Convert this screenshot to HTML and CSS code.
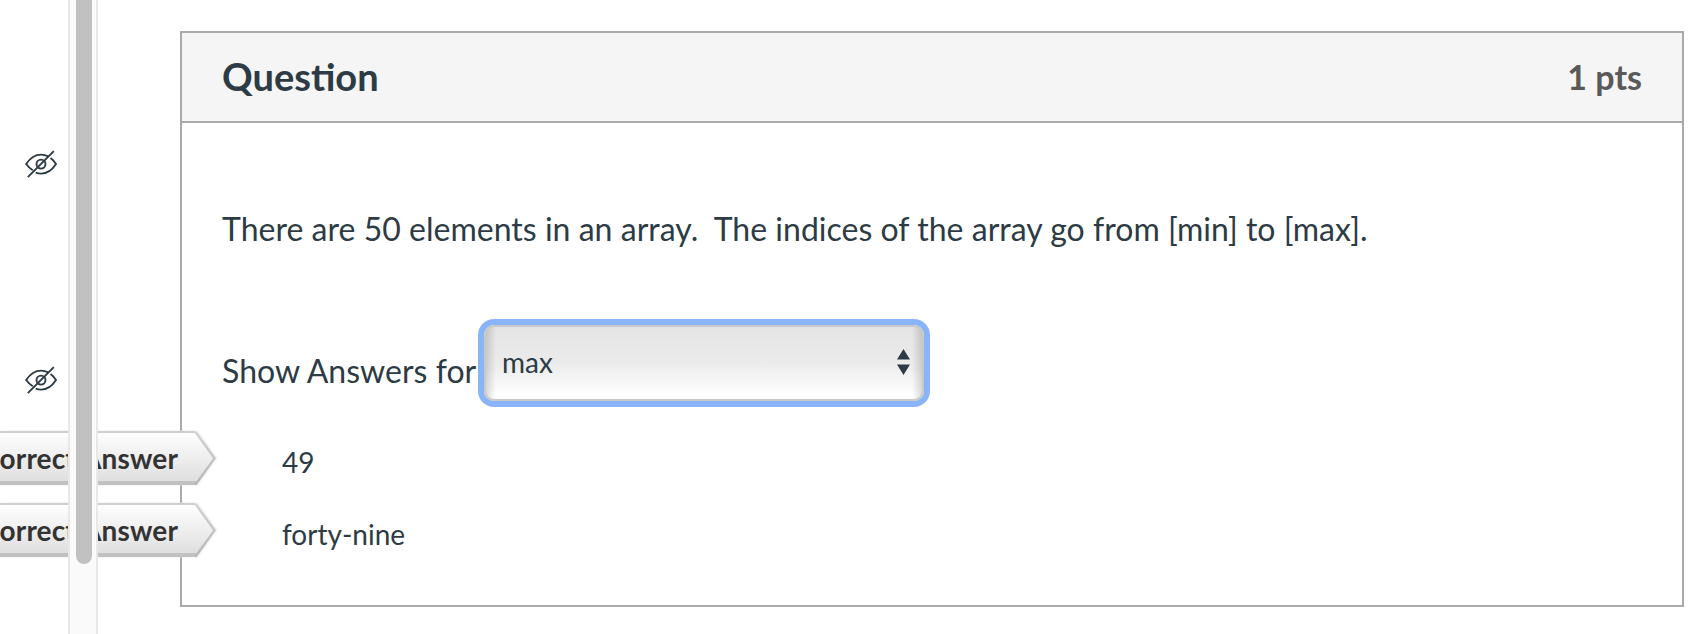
FILE: index.html
```html
<!DOCTYPE html>
<html lang="en">
<head>
<meta charset="utf-8">
<title>Question</title>
<link rel="stylesheet" href="styles.css">
</head>
<body>
<svg class="defs" aria-hidden="true">
  <defs>
    <linearGradient id="tag-fill" x1="0" y1="0" x2="0" y2="1">
      <stop offset="0" stop-color="#ffffff"/>
      <stop offset="1" stop-color="#dddddd"/>
    </linearGradient>
    <linearGradient id="tag-edge" x1="0" y1="0" x2="0" y2="1">
      <stop offset="0" stop-color="#d2d2d2"/>
      <stop offset="1" stop-color="#b4b4b4"/>
    </linearGradient>
    <symbol id="hidden-eye" viewBox="0 0 32 28">
      <g fill="none" stroke="#2d3b45" stroke-width="1.9">
        <path d="M7.800 20.200C5 18.400 2.600 16.100 1.200 14C4.600 8.800 9.800 4.600 16 4.600C18.800 4.600 21 5.300 23.200 6.400"/>
        <path d="M25.500 8C27.800 9.600 29.600 11.900 31 14C27.600 19.300 22.400 23.600 16 23.600C14 23.600 12.200 23.200 10.800 22.600"/>
        <circle cx="16" cy="14.100" r="4.500"/>
        <path d="M2.800 27.100L28.800 1.100"/>
      </g>
    </symbol>
  </defs>
</svg>
<div class="page">
  <aside class="sidebar">
    <div class="icons">
      <svg class="eye"><use href="#hidden-eye"/></svg>
      <svg class="eye"><use href="#hidden-eye"/></svg>
    </div>
    <div class="scrollbar"><div class="thumb"></div></div>
  </aside>
  <main class="question">
    <header class="question-header">
      <h1 class="title">Question</h1>
      <span class="points">1 pts</span>
    </header>
    <div class="question-body">
      <p class="prompt">There are 50 elements in an array.&nbsp; The indices of the array go from [min] to [max].</p>
      <div class="chooser">
        <span class="chooser-label">Show Answers for</span>
        <div class="select">
          <span>max</span>
          <svg class="arrows" viewBox="0 0 13 26"><path d="M6.500 0L13 10.500H0ZM0 15.500H13L6.500 26Z" fill="#2d3b45"/></svg>
        </div>
      </div>
      <div class="answer">
        <div class="tag">
          <svg class="tag-shape" viewBox="0 0 218 56"><path d="M-4 1H195L214.500 27.500L195 53H-4Z" fill="url(#tag-fill)"/><path d="M0 52H196" stroke="#c1c1c1" stroke-width="4"/><path d="M0 1H195" stroke="#cfcfcf" stroke-width="2"/><path d="M195.500 1L214.500 27.300L195.500 53.500" fill="none" stroke="url(#tag-edge)" stroke-width="2.200"/></svg>
          <span class="tag-text">Correct Answer</span>
        </div>
        49
      </div>
      <div class="answer">
        <div class="tag">
          <svg class="tag-shape" viewBox="0 0 218 56"><path d="M-4 1H195L214.500 27.500L195 53H-4Z" fill="url(#tag-fill)"/><path d="M0 52H196" stroke="#c1c1c1" stroke-width="4"/><path d="M0 1H195" stroke="#cfcfcf" stroke-width="2"/><path d="M195.500 1L214.500 27.300L195.500 53.500" fill="none" stroke="url(#tag-edge)" stroke-width="2.200"/></svg>
          <span class="tag-text">Correct Answer</span>
        </div>
        forty-nine
      </div>
    </div>
  </main>
</div>
</body>
</html>
```
FILE: styles.css
```css
* { box-sizing: border-box; }
body {
  margin: 0;
  background: #fff;
  color: #2d3b45;
  font-family: Lato, "Liberation Sans", sans-serif;
  overflow: hidden;
}
.defs { position: absolute; width: 0; height: 0; }
.page { display: flex; height: 634px; overflow: hidden; }
.sidebar { display: flex; width: 98px; flex: none; }
.icons {
  display: flex;
  flex-direction: column;
  gap: 188px;
  width: 68px;
  padding: 150px 0 0 25px;
}
.eye { display: block; width: 32px; height: 28px; }
.scrollbar {
  position: relative;
  z-index: 2;
  width: 30px;
  padding-left: 6px;
  background: #fafafa;
  border: solid #e8e8e8;
  border-width: 0 2px;
}
.thumb {
  width: 16px;
  height: 564px;
  background: #c1c1c1;
  border-radius: 0 0 8px 8px;
}
.question {
  width: 1504px;
  height: 576px;
  margin: 31px 0 0 82px;
  border: 2px solid #aaa;
}
.question-header {
  display: flex;
  align-items: center;
  justify-content: space-between;
  height: 90px;
  padding: 0 40px 2px;
  background: #f5f5f5;
  border-bottom: 2px solid #aaa;
}
.title { margin: 0; font-size: 38px; font-weight: 700; line-height: 46px; }
.points { color: #595959; font-size: 34px; font-weight: 700; }
.question-body { padding: 86px 40px 0; }
.prompt { margin: 0; font-size: 32px; line-height: 40px; letter-spacing: .02px; white-space: nowrap; }
.chooser { display: flex; margin-top: 76px; height: 76px; }
.chooser-label { width: 262px; padding-top: 26px; font-size: 32px; line-height: 40px; letter-spacing: .04px; white-space: nowrap; }
.select {
  display: flex;
  align-items: center;
  justify-content: space-between;
  width: 440px;
  height: 76px;
  padding: 0 12px 2px 16px;
  border: 2px solid #c8c8c8;
  border-radius: 10px;
  background:
    linear-gradient(90deg, rgba(0, 0, 0, .14), transparent 10px, transparent calc(100% - 10px), rgba(0, 0, 0, .14)),
    linear-gradient(#e4e4e4, #ebebeb 50%, #fff 95%);
  box-shadow: 0 0 0 6px #8ab4f8;
  font-size: 28px;
}
.arrows { width: 13px; height: 26px; }
.answer {
  position: relative;
  height: 72px;
  padding-left: 60px;
  font-size: 28px;
  line-height: 72px;
}
.chooser + .answer { margin-top: 25px; }
.tag {
  position: absolute;
  left: -222px;
  top: 5px;
  width: 218px;
  height: 56px;
}
.tag-shape { display: block; width: 218px; height: 56px; filter: drop-shadow(1px 0 1px #e4e4e4); }
.tag-text {
  position: absolute;
  top: 0;
  right: 40px;
  color: #333;
  font-weight: 700;
  letter-spacing: .15px;
  line-height: 54px;
  white-space: nowrap;
}
```
